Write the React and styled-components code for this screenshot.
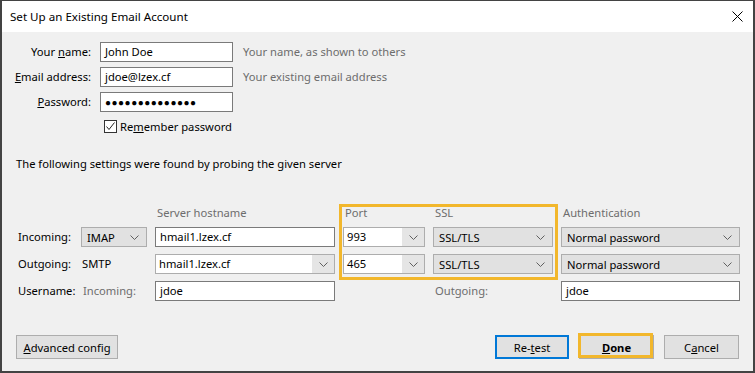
import React from 'react';
import styled, { createGlobalStyle } from 'styled-components';

const GlobalStyle = createGlobalStyle`
  html, body {
    margin: 0;
    padding: 0;
    height: 100%;
  }
  body {
    font-family: "Noto Sans", "Segoe UI", sans-serif;
    font-size: 11.2px;
    color: #000;
    background: #f0f0f0;
  }
  #root {
    height: 100%;
  }
`;

const Window = styled.div`
  height: 100vh;
  box-sizing: border-box;
  border: 2px solid #434343;
  border-top-width: 1px;
  display: flex;
  flex-direction: column;
  background: #f0f0f0;
`;

const TitleBar = styled.div`
  height: 31px;
  flex-shrink: 0;
  background: #fff;
  display: flex;
  align-items: center;
  justify-content: space-between;
  padding: 0 10px 0 8px;
  font-size: 11.6px;
`;

const Content = styled.div`
  flex: 1;
  display: flex;
  flex-direction: column;
  padding-top: 10px;
`;

const TopForm = styled.div`
  display: grid;
  grid-template-columns: 89px 133px auto;
  grid-auto-rows: 20px;
  column-gap: 9px;
  row-gap: 5px;
`;

const Label = styled.div`
  text-align: right;
  line-height: 20px;
  white-space: nowrap;
`;

const Hint = styled.div`
  color: #6d6d6d;
  line-height: 20px;
  padding-left: 1px;
  white-space: nowrap;
`;

const Field = styled.div`
  height: 20px;
  box-sizing: border-box;
  border: 1px solid #7a7a7a;
  background: #fff;
  padding: 0 4px;
  line-height: 18px;
  white-space: nowrap;
  overflow: hidden;
  letter-spacing: ${p => (p.$dots ? '0.5px' : 'normal')};
  font-size: ${p => (p.$dots ? '10px' : 'inherit')};
`;

const CheckRow = styled.div`
  grid-column: 2 / 4;
  display: flex;
  align-items: center;
  gap: 3px;
  padding-left: 4px;
  margin-top: -1px;
`;

const CheckBox = styled.span`
  width: 13px;
  height: 13px;
  box-sizing: border-box;
  border: 1px solid #333;
  background: #fff;
  display: flex;
  align-items: center;
  justify-content: center;
`;

const ProbeText = styled.div`
  margin-top: 19px;
  padding-left: 14px;
  line-height: 16px;
`;

const ServerGrid = styled.div`
  position: relative;
  margin-top: 34px;
  padding-left: 15px;
  display: grid;
  grid-template-columns: 56px 66px 180px 82px 120px 179px;
  grid-template-rows: 14px 20px 20px 20px;
  column-gap: 8px;
  row-gap: 7px;
`;

const ColHead = styled.div`
  color: #6d6d6d;
  line-height: 14px;
  padding-left: 2px;
  white-space: nowrap;
`;

const RowLabel = styled.div`
  line-height: 20px;
  padding-left: ${p => (p.$gray ? '2px' : '1px')};
  color: ${p => (p.$gray ? '#6d6d6d' : '#000')};
  white-space: nowrap;
`;

const Select = styled.div`
  height: 20px;
  box-sizing: border-box;
  border: 1px solid #adadad;
  background: #e1e1e1;
  display: flex;
  align-items: center;
  justify-content: space-between;
  padding: 0 7px 0 5px;
  white-space: nowrap;
`;

const Combo = styled.div`
  height: 20px;
  box-sizing: border-box;
  border: 1px solid #adadad;
  background: #e5e5e5;
  display: flex;
`;

const ComboText = styled.div`
  flex: 1;
  background: #fff;
  padding: 0 3px;
  line-height: 18px;
  white-space: nowrap;
`;

const ComboButton = styled.div`
  width: 22px;
  display: flex;
  align-items: center;
  justify-content: center;
`;

/* annotation frame drawn over the Port / SSL columns */
const Highlight = styled.div`
  position: absolute;
  left: 337px;
  top: -2px;
  width: 219px;
  height: 76px;
  box-sizing: border-box;
  border: 3px solid #f2b72c;
  pointer-events: none;
`;

const Footer = styled.div`
  margin-top: auto;
  display: flex;
  justify-content: space-between;
  align-items: flex-end;
  padding: 0 14px 12px 14px;
`;

const ButtonGroup = styled.div`
  display: flex;
  gap: 10px;
`;

const Button = styled.div`
  position: relative;
  height: 24px;
  width: ${p => p.$w}px;
  box-sizing: border-box;
  border: ${p => (p.$focus ? '2px solid #0078d7' : '1px solid #adadad')};
  background: #e1e1e1;
  display: flex;
  align-items: center;
  justify-content: center;
  font-weight: ${p => (p.$bold ? 700 : 400)};
  white-space: nowrap;
`;

const Ring = styled.span`
  position: absolute;
  top: -3px;
  left: -2px;
  right: 0px;
  bottom: 0px;
  border: 3px solid #f2b72c;
  pointer-events: none;
`;

const Chevron = () => (
  <svg width="9" height="5" viewBox="0 0 9 5">
    <polyline points="0.5,0.5 4.5,4.5 8.5,0.5" fill="none" stroke="#606060" strokeWidth="1" />
  </svg>
);

const CloseIcon = () => (
  <svg width="11" height="11" viewBox="0 0 11 11">
    <path d="M0.5 0.5 L10.5 10.5 M10.5 0.5 L0.5 10.5" stroke="#000" strokeWidth="1" />
  </svg>
);

const Check = () => (
  <svg width="11" height="11" viewBox="0 0 11 11">
    <polyline points="1.5,5.5 4,8.5 9.5,1.5" fill="none" stroke="#222" strokeWidth="1" />
  </svg>
);

export default function App() {
  return (
    <>
      <GlobalStyle />
      <Window>
        <TitleBar>
          <span>Set Up an Existing Email Account</span>
          <CloseIcon />
        </TitleBar>
        <Content>
          <TopForm>
            <Label>Your <u>n</u>ame:</Label>
            <Field>John Doe</Field>
            <Hint>Your name, as shown to others</Hint>

            <Label><u>E</u>mail address:</Label>
            <Field>jdoe@lzex.cf</Field>
            <Hint>Your existing email address</Hint>

            <Label><u>P</u>assword:</Label>
            <Field $dots>{'●'.repeat(14)}</Field>
            <div />

            <CheckRow>
              <CheckBox><Check /></CheckBox>
              <span>Re<u>m</u>ember password</span>
            </CheckRow>
          </TopForm>

          <ProbeText>The following settings were found by probing the given server</ProbeText>

          <ServerGrid>
            <div />
            <div />
            <ColHead>Server hostname</ColHead>
            <ColHead>Port</ColHead>
            <ColHead>SSL</ColHead>
            <ColHead>Authentication</ColHead>

            <RowLabel>Incoming:</RowLabel>
            <Select><span>IMAP</span><Chevron /></Select>
            <Field>hmail1.lzex.cf</Field>
            <Combo>
              <ComboText>993</ComboText>
              <ComboButton><Chevron /></ComboButton>
            </Combo>
            <Select><span>SSL/TLS</span><Chevron /></Select>
            <Select><span>Normal password</span><Chevron /></Select>

            <RowLabel>Outgoing:</RowLabel>
            <RowLabel>SMTP</RowLabel>
            <Combo>
              <ComboText>hmail1.lzex.cf</ComboText>
              <ComboButton><Chevron /></ComboButton>
            </Combo>
            <Combo>
              <ComboText>465</ComboText>
              <ComboButton><Chevron /></ComboButton>
            </Combo>
            <Select><span>SSL/TLS</span><Chevron /></Select>
            <Select><span>Normal password</span><Chevron /></Select>

            <RowLabel>Username:</RowLabel>
            <RowLabel $gray>Incoming:</RowLabel>
            <Field>jdoe</Field>
            <div />
            <RowLabel $gray>Outgoing:</RowLabel>
            <Field>jdoe</Field>

            <Highlight />
          </ServerGrid>

          <Footer>
            <Button $w={102}><span><u>A</u>dvanced config</span></Button>
            <ButtonGroup>
              <Button $w={74} $focus><span>Re-<u>t</u>est</span></Button>
              <Button $w={75} $bold><span><u>D</u>one</span><Ring /></Button>
              <Button $w={75}><span>C<u>a</u>ncel</span></Button>
            </ButtonGroup>
          </Footer>
        </Content>
      </Window>
    </>
  );
}
